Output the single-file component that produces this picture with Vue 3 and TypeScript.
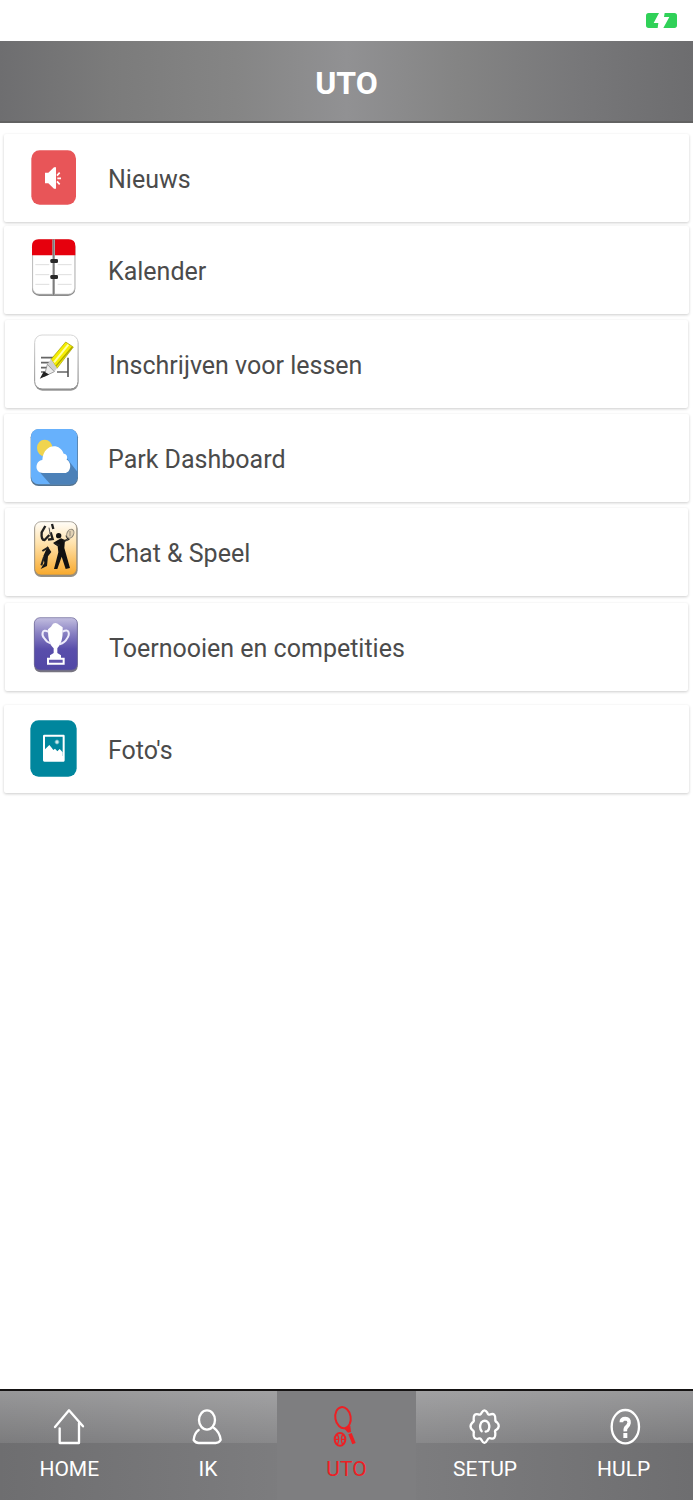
<script setup lang="ts">
import { ref } from 'vue'

type IconName = 'news' | 'calendar' | 'lessons' | 'park' | 'chat' | 'cup' | 'photos'
interface MenuRow {
  label: string
  icon: IconName
  viewBox: string
  variant: string
}
interface Tab {
  label: string
  icon: string
}

const rows: MenuRow[] = [
  { label: 'Nieuws', icon: 'news', viewBox: '0 9 210 210', variant: '' },
  { label: 'Kalender', icon: 'calendar', viewBox: '0 9 210 210', variant: 'tight' },
  { label: 'Inschrijven voor lessen', icon: 'lessons', viewBox: '3 6 210 210', variant: 'inset' },
  { label: 'Park Dashboard', icon: 'park', viewBox: '0 3 210 210', variant: '' },
  { label: 'Chat & Speel', icon: 'chat', viewBox: '3 6 210 210', variant: 'inset' },
  { label: 'Toernooien en competities', icon: 'cup', viewBox: '3 9 210 210', variant: 'inset roomy' },
  { label: "Foto's", icon: 'photos', viewBox: '0 3 210 210', variant: 'apart' },
]

const tabs: Tab[] = [
  { label: 'HOME', icon: 'home' },
  { label: 'IK', icon: 'person' },
  { label: 'UTO', icon: 'racket' },
  { label: 'SETUP', icon: 'gear' },
  { label: 'HULP', icon: 'help' },
]
const active = ref('UTO')
</script>

<template>
  <div class="screen">
    <div class="status">
      <svg class="battery" viewBox="0 0 93 45" aria-label="Opladen">
        <path d="M8 0H39L23 30H37L35 45H8Q0 45 0 37V8Q0 0 8 0Z" fill="#30d158" />
        <path d="M56 0H85Q93 0 93 8V37Q93 45 85 45H52L70 12H54Z" fill="#30d158" />
      </svg>
    </div>

    <header class="bar"><h1>UTO</h1></header>

    <main class="list">
      <button v-for="row in rows" :key="row.label" type="button" class="card" :class="row.variant">
        <svg class="icon" :viewBox="row.viewBox" aria-hidden="true">
          <defs>
            <linearGradient id="gold" x1="0" y1="0" x2="0" y2="1">
              <stop offset="0" stop-color="#fffdf8" /><stop offset=".4" stop-color="#ffe3ae" /><stop offset="1" stop-color="#f8a92c" />
            </linearGradient>
            <linearGradient id="violet" x1="0" y1="0" x2="0" y2="1">
              <stop offset="0" stop-color="#c3bfe0" /><stop offset=".3" stop-color="#8880c2" /><stop offset=".6" stop-color="#594eab" /><stop offset="1" stop-color="#5147a5" />
            </linearGradient>
            <linearGradient id="paper" x1="0" y1="0" x2="0" y2="1">
              <stop offset="0" stop-color="#d8d8d8" /><stop offset="1" stop-color="#858585" />
            </linearGradient>
          </defs>

          <template v-if="row.icon === 'news'">
            <rect x="34" y="31" width="134" height="163" rx="25" fill="#e85558" />
            <path d="M75 98H85L102 82H108V146H102L85 130H75Z" fill="#fff" />
            <path d="M111 107L119 98M112 115H123M111 124L119 133" fill="none" stroke="#fff" stroke-width="5" />
          </template>

          <template v-else-if="row.icon === 'calendar'">
            <rect x="36" y="24" width="130" height="168" rx="22" fill="#8c8c8c" />
            <rect x="38" y="23" width="126" height="163" rx="19" fill="#fff" stroke="#ccc" stroke-width="2" />
            <path d="M36 70V42Q36 22 56 22H146Q166 22 166 42V70Z" fill="#e6000d" />
            <path d="M46 98H88M46 128H88M46 157H88M113 98H155M113 128H155M113 157H155" stroke="#dedede" stroke-width="3" />
            <path d="M101 22V189" stroke="#aaa" stroke-width="8" />
            <path d="M101 22V189" stroke="#757575" stroke-width="3" />
            <rect x="91" y="81" width="23" height="12" rx="4" fill="#292929" />
            <rect x="91" y="129" width="23" height="12" rx="4" fill="#292929" />
          </template>

          <template v-else-if="row.icon === 'lessons'">
            <rect x="45" y="27" width="130" height="164" rx="22" fill="#999" />
            <rect x="44" y="24" width="130" height="162" rx="22" fill="#fff" stroke="url(#paper)" stroke-width="3" />
            <path d="M63 92H109M63 107H96M63 122H91M63 135H82M111 135H143" stroke="#666" stroke-width="5" />
            <path d="M144 92V150" stroke="#333" stroke-width="4" />
            <path d="M93 97L137 45L160 60L111 124Z" fill="#f5ed00" stroke="#9d9900" stroke-width="2" />
            <path d="M102 106L145 53" stroke="#ffffa4" stroke-width="6" />
            <path d="M107 118L157 60" stroke="#aaa600" stroke-width="4" />
            <path d="M93 97L111 124L103 134L82 112Z" fill="#cfcfcf" />
            <path d="M82 112L103 134L72 149Z" fill="#ededed" stroke="#777" stroke-width="2" />
            <path d="M72 136L83 142L64 151Z" fill="#222" stroke="#222" stroke-width="4" />
          </template>

          <template v-else-if="row.icon === 'park'">
            <rect x="32" y="22" width="142" height="170" rx="24" fill="#547491" />
            <rect x="33" y="21" width="139" height="166" rx="23" fill="#67b1fc" />
            <path d="M58 149L91 187H149Q172 187 172 164V149L138 106Z" fill="#4c81b8" />
            <ellipse cx="74" cy="78" rx="23" ry="25" fill="#f0d44e" />
            <path d="M69 153C42 153 45 116 67 114C70 65 120 61 131 95C144 96 142 109 140 113C157 121 153 153 134 153Z" fill="#fff" />
          </template>

          <template v-else-if="row.icon === 'chat'">
            <rect x="43" y="21" width="130" height="165" rx="20" fill="#969187" />
            <rect x="44" y="20" width="126" height="160" rx="19" fill="url(#gold)" stroke="#8c8578" stroke-width="2" />
            <path d="M76 33L65 52Q63 76 74 75L88 60M84 74L98 72L92 52M96 27L100 42" fill="none" stroke="#202020" stroke-width="7" />
            <path d="M87 38L91 59" stroke="#555" stroke-width="3" />
            <path d="M83 94L94 111L84 124L81 153L62 162L73 144L70 123Z" fill="#161616" />
            <path d="M67 108L85 97M72 126L64 151" stroke="#222" stroke-width="6" />
            <circle cx="116" cy="62" r="8" fill="#111" />
            <path d="M110 77L123 70L135 75L133 99L150 159L137 162L125 125L112 162L102 162L115 112L113 94L99 84Z" fill="#111" />
            <path d="M105 85L119 92M130 79L145 73L139 61" fill="none" stroke="#222" stroke-width="6" />
            <ellipse cx="151" cy="56" rx="10" ry="14" fill="#e2d2b5" stroke="#8d8779" stroke-width="3" transform="rotate(25 151 56)" />
            <path d="M145 71L136 79M150 48V64" stroke="#776e61" stroke-width="2" />
          </template>

          <template v-else-if="row.icon === 'cup'">
            <rect x="43" y="27" width="130" height="163" rx="18" fill="#777581" />
            <rect x="43" y="26" width="129" height="157" rx="17" fill="url(#violet)" stroke="#666195" stroke-width="2" />
            <path d="M84 61L93 53L99 44Q109 39 117 47L128 55V68C128 102 116 112 112 118V132L123 139V147H90V139L101 132V118C89 106 84 94 84 61Z" fill="#fff" />
            <path d="M85 68C65 57 64 79 73 88Q79 99 92 103M128 68C148 57 151 76 140 90Q135 100 119 106" fill="none" stroke="#eeecfb" stroke-width="6" />
            <path d="M84 149H131V164H84Z" fill="#6053ac" stroke="#fff" stroke-width="6" />
          </template>

          <template v-else>
            <rect x="31" y="22" width="139" height="169" rx="25" fill="#00869d" />
            <path fill-rule="evenodd" d="M73 65H131Q134 65 134 69V142Q134 146 131 146H73Q69 146 69 142V69Q69 65 73 65ZM75 71V129H128V71Z" fill="#fff" />
            <path d="M75 129V109L88 96L95 104L100 111L105 107L112 115L119 108L128 118V129Z" fill="#fff" />
            <circle cx="111" cy="87" r="5" fill="#fff" />
            <path d="M111 78V96M102 87H120M105 81L117 93M117 81L105 93" stroke="#a5d5dd" stroke-width="1" />
          </template>
        </svg>
        <span>{{ row.label }}</span>
      </button>
    </main>

    <nav class="tabs">
      <button
        v-for="tab in tabs"
        :key="tab.label"
        type="button"
        class="tab"
        :class="{ active: tab.label === active }"
        @click="active = tab.label"
      >
        <svg class="glyph" viewBox="0 0 120 132" aria-hidden="true">
          <g v-if="tab.icon === 'home'" fill="none" stroke="currentColor" stroke-width="7" stroke-linecap="round" stroke-linejoin="round">
            <path d="M18 66L60 16L102 64M32 70V114H90V55" />
          </g>
          <g v-else-if="tab.icon === 'person'" fill="none" stroke="currentColor" stroke-width="7" stroke-linecap="round" stroke-linejoin="round">
            <ellipse cx="57" cy="45" rx="24" ry="29" />
            <path d="M32 75Q19 84 17 105Q23 114 32 114H83Q93 114 98 105Q95 81 78 69" />
          </g>
          <g v-else-if="tab.icon === 'racket'" fill="none" stroke="currentColor" stroke-width="6">
            <ellipse cx="51" cy="38" rx="23" ry="32" transform="rotate(-10 51 38)" />
            <path d="M55 71L73 62L75 81L66 83Z" fill="currentColor" stroke="none" />
            <path d="M72 86L84 116" stroke-width="11" />
            <ellipse cx="42" cy="103" rx="16" ry="19" />
            <path d="M34 88Q42 103 34 119M50 88Q42 103 50 119M27 103H37M47 103H57" stroke-width="4" />
          </g>
          <g v-else-if="tab.icon === 'gear'" fill="none" stroke="currentColor" stroke-width="7" stroke-linecap="round" stroke-linejoin="round">
            <path d="M50 23Q58 9 67 23Q69 31 76 28Q92 23 91 43Q90 49 96 52Q107 64 95 74Q88 77 91 84Q92 105 77 100Q70 98 67 105Q58 122 50 106Q47 98 40 101Q24 104 26 85Q28 78 22 75Q11 64 22 53Q28 50 26 43Q25 24 40 28Q47 31 50 23Z" />
            <path d="M50 79Q41 68 49 52Q60 42 70 53Q77 67 68 78L62 80" />
          </g>
          <g v-else fill="none" stroke="currentColor" stroke-width="7">
            <ellipse cx="64" cy="65" rx="41" ry="50" />
            <path d="M52 52Q52 41 64 41Q76 42 75 54Q74 61 68 66Q63 70 64 79" stroke-width="11" />
            <path d="M64 84V99" stroke-width="12" />
          </g>
        </svg>
        <span>{{ tab.label }}</span>
      </button>
    </nav>
  </div>
</template>

<style>
body {
  margin: 0;
  background: #fff;
}
</style>

<style scoped>
.screen {
  display: flex;
  flex-direction: column;
  min-height: 100vh;
  font-family: Roboto, "Liberation Sans", sans-serif;
}
.status {
  display: flex;
  justify-content: flex-end;
  align-items: center;
  height: 41px;
  padding-right: 16px;
}
.battery {
  width: 31px;
  height: 15px;
}
.bar {
  display: flex;
  align-items: center;
  justify-content: center;
  height: 82px;
  box-sizing: border-box;
  border-bottom: 2px solid #626262;
  background: linear-gradient(90deg, #6e6e70, #7b7b7b 16%, #858585 34%, #919193 50%, #848484 66%, #777779 84%, #6d6d6f);
}
h1 {
  margin: 4px 0 0;
  color: #fff;
  font-size: 32px;
  line-height: 40px;
}
.list {
  display: flex;
  flex: 1;
  flex-direction: column;
  padding: 5px 4px;
}
.card {
  display: flex;
  align-items: center;
  gap: 18px;
  height: 88px;
  margin: 6px 0 0;
  padding: 0 16px;
  border: 0;
  border-radius: 2px;
  background: #fff;
  box-shadow: 0 1px 3px #0003;
  color: #4b4b4b;
  font: inherit;
  font-size: 25px;
  line-height: 36px;
  text-align: left;
}
.tight {
  margin-top: 4px;
}
.inset {
  margin-right: 1px;
  margin-left: 1px;
}
.roomy {
  margin-top: 7px;
}
.apart {
  margin-top: 14px;
}
.icon {
  flex: none;
  width: 70px;
  height: 70px;
}
.card span {
  padding-top: 4px;
}
.tabs {
  display: grid;
  grid-template-columns: repeat(5, 1fr);
  height: 109px;
  border-top: 2px solid #151313;
  background:
    linear-gradient(#ffffff48, #ffffff18) top / 100% 52px no-repeat,
    linear-gradient(90deg, #6e6e70, #808082 50%, #6e6e70);
}
.tab {
  display: flex;
  flex-direction: column;
  align-items: center;
  gap: 4px;
  padding: 14px 0 0;
  border: 0;
  background: none;
  color: #fff;
  font: inherit;
  font-size: 21px;
  line-height: 32px;
}
.active {
  background: #7e7e80;
  color: #ed2024;
}
.glyph {
  width: 40px;
  height: 44px;
}
</style>
